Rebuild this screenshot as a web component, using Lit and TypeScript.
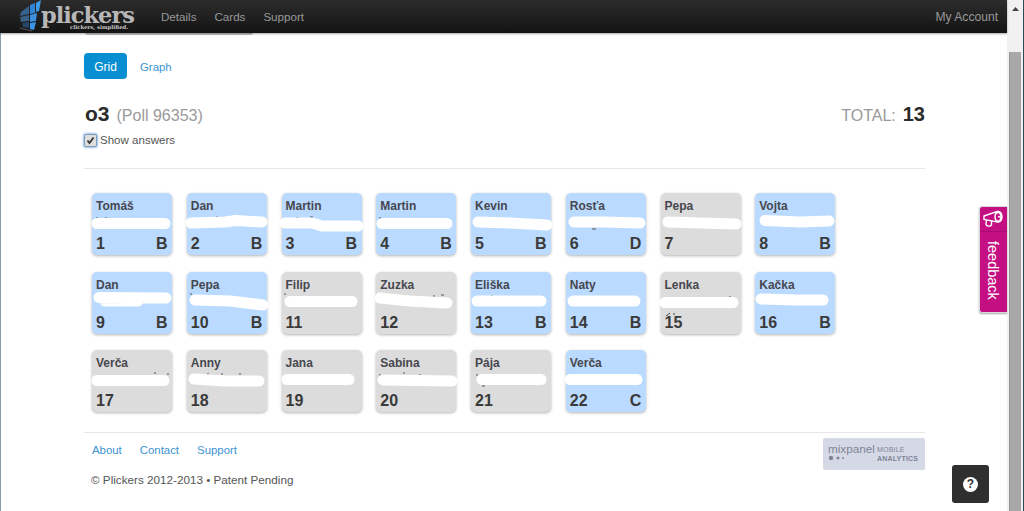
import { LitElement, html, css, svg } from "lit";
import { customElement } from "lit/decorators.js";

const cards: [string, number, string][] = [
  ["Tomáš",1,"B"],["Dan",2,"B"],["Martin",3,"B"],["Martin",4,"B"],["Kevin",5,"B"],["Rosťa",6,"D"],["Pepa",7,""],["Vojta",8,"B"],
  ["Dan",9,"B"],["Pepa",10,"B"],["Filip",11,""],["Zuzka",12,""],["Eliška",13,"B"],["Naty",14,"B"],["Lenka",15,""],["Kačka",16,"B"],
  ["Verča",17,""],["Anny",18,""],["Jana",19,""],["Sabina",20,""],["Pája",21,""],["Verča",22,"C"],
];

// White censor strokes painted over the cards, in page coordinates.
const smears: string[] = [
  "M97 223.5H165","M191 223L225 222L236 220.5L262 222","M285 223L312 223L322 226L358 226","M382 223.5H447",
  "M478 222L510 223L547 225","M574 222L605 222L640 223","M668 222L700 223L736 224","M765 220.5L800 222L829 221",
  "M99 297.5L166 298M105 301L138 301","M195 300L230 301L263 305","M290 301.5H352","M380 298L410 301L447 303",
  "M477 301H541","M573 301H635","M665 302.5H733","M761 299L795 300L823 300",
  "M97 380.5H164","M194 379L225 381L259 381","M287 379.5H349","M383 380L452 381","M482 379.5H541","M570 379.5H637",
];
const traces = "M97 217v2M106 217v2M217 216v2M296 218h3M310 217h3M380 217v2M592 229h4M433 296h2M441 295h3M491 296h2M730 296v2M191 293v2M285 293v2M208 373v2M222 373v2M240 373v2M155 372v2M168 373v2M380 374v2M403 373h2M420 374v2M477 374v2M482 386h3";

@customElement("app-root")
export class AppRoot extends LitElement {
  static styles = css`
    :host { display: block; width: 1024px; height: 511px; overflow: hidden; position: relative; background: #fff;
      font-family: "Liberation Sans", Arial, sans-serif; color: #333; }
    .page { display: flex; height: 511px; }
    .main { width: 1007px; flex: none; position: relative; border-left: 1px solid #8d9dab; box-sizing: border-box; }
    .scroll { width: 17px; flex: none; background: #f1f1f1; border-right: 1px solid #2c4a52; box-sizing: border-box; display: flex; flex-direction: column; align-items: center; }
    .arrow { height: 17px; display: flex; align-items: center; justify-content: center; margin-bottom: 35px; }
    .thumb { width: 12px; flex: 1; background: #a8a8a8; border-left: 1px solid #999; box-sizing: border-box; }
    nav { height: 33px; margin-left: -1px; background: linear-gradient(#2c2c2c, #141414); display: flex; align-items: center; font-size: 11.6px; color: #999; box-shadow: 0 1px 2px rgba(0,0,0,.35); position: relative; }
    .logo { width: 161px; flex: none; display: flex; align-self: stretch; position: relative; }
    .logo svg { position: absolute; left: 15px; top: 0; }
    .wordmark { position: absolute; left: 41px; top: 6.5px; font: bold 22.5px/17px "DejaVu Serif", serif; color: #b8b8b8; letter-spacing: -1px; }
    .tag { position: absolute; left: 70px; top: 23.5px; font: bold 5.3px/6px "DejaVu Serif", serif; color: #ccc; white-space: nowrap; }
    .links { display: flex; gap: 18px; }
    .account { margin-left: auto; margin-right: 9px; font-size: 12.1px; }
    .stub { width: 168px; height: 2px; margin-left: 84px; background: #c4c4c4; border-radius: 0 0 4px 4px; }
    .content { width: 841px; margin-left: 83px; }
    .tabs { display: flex; align-items: center; gap: 13px; margin-top: 18px; font-size: 12px; }
    .pill { width: 43px; height: 26px; background: #0a8ed2; color: #fff; border-radius: 4px; display: flex; align-items: center; justify-content: center; padding-top: 1px; box-sizing: border-box; }
    .glink { color: #3c93cf; font-size: 11.4px; padding-top: 1px; }
    .head { display: flex; justify-content: space-between; align-items: baseline; margin-top: 20px; height: 30px; line-height: 30px; }
    .o3 { font-size: 21px; font-weight: bold; color: #2b2b2b; margin-left: 1px; margin-right: 7px; }
    .poll { font-size: 16px; color: #9a9a9a; }
    .tlabel { font-size: 16px; color: #999; margin-right: 7px; }
    .tnum { font-size: 20px; font-weight: bold; color: #2b2b2b; }
    .show { display: flex; align-items: center; gap: 3px; font-size: 11.55px; color: #555; height: 14px; margin-top: 4px; }
    .check { width: 11px; height: 11px; border: 1px solid #7f9db9; border-radius: 2px; background: #dedede; box-shadow: 0 0 2px 1px #9dc2ee; display: flex; }
    hr { border: 0; border-top: 1px solid #e8e8e8; margin: 0; }
    .rule1 { margin-top: 21px; }
    .gridwrap { position: relative; padding: 24px 0 19.6px 8px; }
    .grid { display: grid; grid-template-columns: repeat(8, 80px); column-gap: 14.75px; row-gap: 16.7px; }
    .card { height: 62px; border-radius: 5px; background: #dcdcdc; box-shadow: 0 1px 3px rgba(0,0,0,.3); box-sizing: border-box; padding: 6px 4.5px 2px 4px; display: flex; flex-direction: column; justify-content: space-between; }
    .card.on { background: #badbff; }
    .name { font-size: 12px; font-weight: bold; line-height: 15px; color: #47474f; }
    .row { display: flex; justify-content: space-between; font-size: 16px; font-weight: bold; line-height: 18px; color: #3a3a3a; }
    .ink { position: absolute; left: 0; top: 0; pointer-events: none; }
    footer { position: relative; padding-top: 10px; }
    .flinks { display: flex; gap: 18px; margin-left: 8px; font-size: 11.4px; color: #3c93cf; line-height: 14px; }
    .copy { margin: 16px 0 0 7px; font-size: 11.7px; line-height: 14px; color: #555; }
    .mix { position: absolute; right: 0; top: 5px; width: 102px; height: 32px; background: #d5d9e6; border-radius: 2px; color: #7e8596; }
    .mix .w { position: absolute; left: 5px; top: 3px; font-size: 11.7px; line-height: 15px; }
    .mix .a { position: absolute; left: 54px; top: 7px; font-size: 7px; line-height: 9px; font-weight: bold; letter-spacing: .2px; }
    .mix .l2 { top: 16px; }
    .mix .m { font-weight: normal; }
    .mix svg { position: absolute; left: 5px; top: 17px; }
    .fb { position: absolute; left: 979px; top: 206px; width: 28px; height: 107px; background: #c40f82; border: 1px solid #d9d9d9; border-right: 0; border-radius: 3px 0 0 3px; box-shadow: 0 1px 2px rgba(0,0,0,.35); box-sizing: border-box; color: #fff; }
    .fb .icon { height: 24px; border-bottom: 1px solid #a80c70; display: flex; align-items: center; justify-content: center; }
    .fb .txt { writing-mode: vertical-rl; font-size: 14.5px; line-height: 26px; padding-top: 9px; }
    .help { position: absolute; left: 952px; top: 465px; width: 37px; height: 38px; background: #2f2f2f; border-radius: 3px; display: flex; align-items: center; justify-content: center; }
    .help span { width: 15px; height: 15px; border-radius: 50%; background: #fff; color: #2f2f2f; font-size: 12px; font-weight: bold; line-height: 15px; text-align: center; }
  `;

  render() {
    return html`
      <div class="page">
        <div class="main">
          <nav>
            <div class="logo">
              <svg width="30" height="32" viewBox="0 0 30 32">
                <path d="M15 5L20 3V13L15 14Z" fill="#2f86d6"/><path d="M21 3L26 0L24 11L21 12Z" fill="#3f9be8"/>
                <path d="M6 12L14 6V14L5 16Z" fill="#34648f"/>
                <path d="M5 17L14 15V21L6 22Z" fill="#3a5e84"/><path d="M15 15L22 13L21 21L15 22Z" fill="#3c90dc"/>
                <path d="M7 23L14 22V28L8 27Z" fill="#24476a"/><path d="M15 23L21 22L19 30L15 29Z" fill="#3b95e8"/>
                <path d="M5 28L17 31" stroke="#555" stroke-width="1"/>
              </svg>
              <span class="wordmark">plickers</span>
              <span class="tag">clickers, simplified.</span>
            </div>
            <div class="links"><span>Details</span><span>Cards</span><span>Support</span></div>
            <span class="account">My Account</span>
          </nav>
          <div class="stub"></div>
          <div class="content">
            <div class="tabs"><span class="pill">Grid</span><span class="glink">Graph</span></div>
            <div class="head">
              <div><span class="o3">o3</span><span class="poll">(Poll 96353)</span></div>
              <div><span class="tlabel">TOTAL:</span><span class="tnum">13</span></div>
            </div>
            <div class="show">
              <span class="check"><svg width="11" height="11" viewBox="0 0 11 11"><path d="M2.5 5.5L4.5 8L8.5 2.5" fill="none" stroke="#333" stroke-width="1.8"/></svg></span>
              <span>Show answers</span>
            </div>
            <hr class="rule1" />
            <div class="gridwrap">
              <div class="grid">
                ${cards.map(([n, id, a]) => html`
                  <div class="card ${a ? "on" : ""}">
                    <div class="name">${n}</div>
                    <div class="row"><span>${id}</span><span>${a}</span></div>
                  </div>`)}
              </div>
              <svg class="ink" width="841" height="260" viewBox="84 169 841 260">
                <path d="${traces}" stroke="#555" stroke-width="1" fill="none"/>
                ${smears.map((d) => svg`<path d=${d} fill="none" stroke="#fff" stroke-width="11" stroke-linecap="round" stroke-linejoin="round"/>`)}
                <path d="M666 316L670 313M673 314h2" stroke="#444" stroke-width="1" fill="none"/>
              </svg>
            </div>
            <hr />
            <footer>
              <div class="flinks"><span>About</span><span>Contact</span><span>Support</span></div>
              <div class="copy">© Plickers 2012-2013 • Patent Pending</div>
              <div class="mix">
                <span class="w">mixpanel</span>
                <span class="a m">MOBILE</span>
                <span class="a l2">ANALYTICS</span>
                <svg width="20" height="6" viewBox="0 0 20 6"><circle cx="3" cy="3" r="2.2" fill="#7e8596"/><circle cx="10" cy="3" r="1.5" fill="#7e8596"/><circle cx="15" cy="3" r="1" fill="#7e8596"/></svg>
              </div>
            </footer>
          </div>
        </div>
        <div class="scroll">
          <div class="arrow"><svg width="7" height="4" viewBox="0 0 7 4"><path d="M3.5 0L7 4H0Z" fill="#444"/></svg></div>
          <div class="thumb"></div>
        </div>
      </div>
      <div class="fb">
        <div class="icon">
          <svg width="21" height="18" viewBox="0 0 21 18" fill="none" stroke="#fff" stroke-width="1.4">
            <path d="M1 6L14 1.5V12L1 9.5Z"/>
            <ellipse cx="15.5" cy="6.8" rx="4.2" ry="6" fill="#fff" stroke="none"/>
            <ellipse cx="15" cy="6.8" rx="2.2" ry="3.6" fill="#c40f82" stroke="none"/>
            <circle cx="16" cy="6.8" r="1" fill="#fff" stroke="none"/>
            <path d="M3.5 10L3 14C3 16.5 8 17 8.5 14.5L8.5 11"/>
          </svg>
        </div>
        <div class="txt">feedback</div>
      </div>
      <div class="help"><span>?</span></div>
    `;
  }
}
